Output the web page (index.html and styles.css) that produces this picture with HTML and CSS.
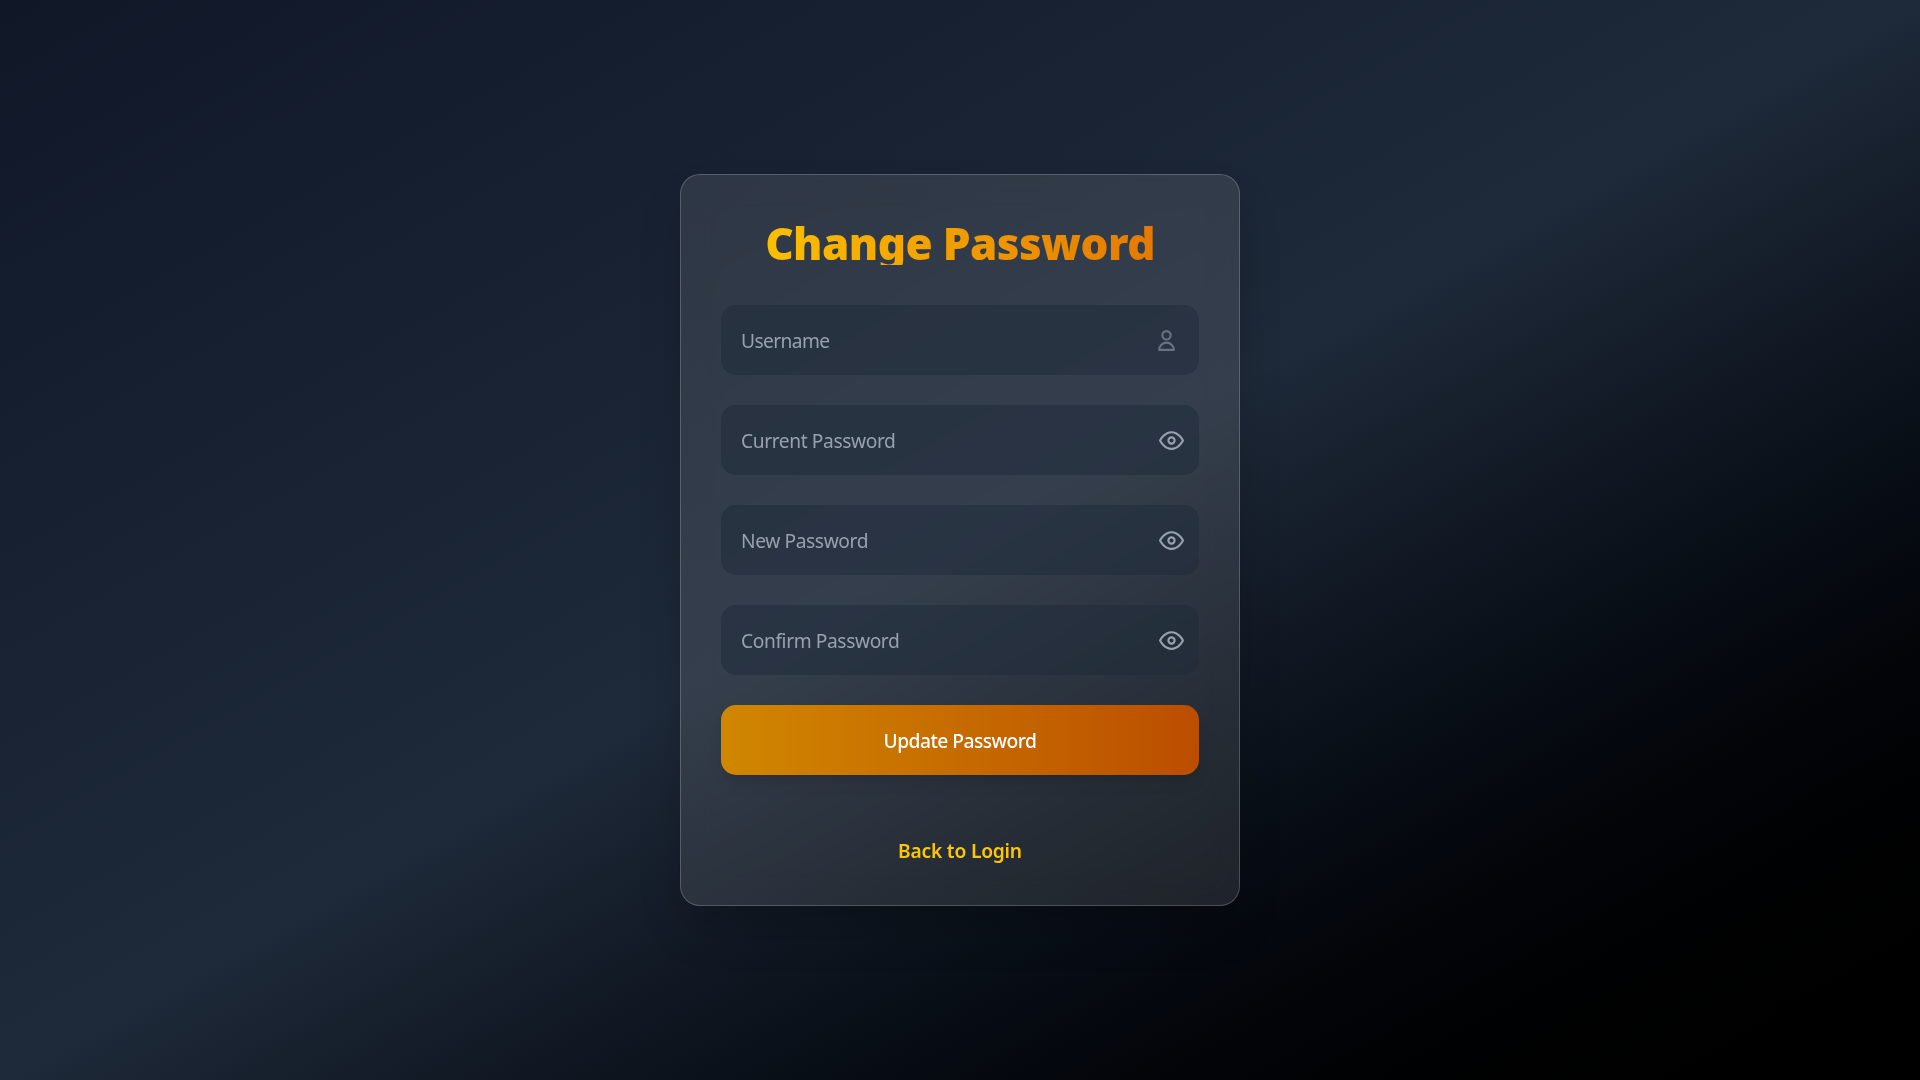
FILE: index.html
```html
<!DOCTYPE html>
<html lang="en">
<head>
<meta charset="utf-8">
<title>Change Password</title>
<link rel="stylesheet" href="styles.css">
</head>
<body>
<main class="page">
  <section class="card">
    <h1 class="title">Change Password</h1>
    <form class="form">
      <div class="field">
        <span class="placeholder username">Username</span>
        <svg class="icon icon-user" viewBox="0 0 24 24"><path d="M16 7a4 4 0 11-8 0 4 4 0 018 0zM12 14a7 7 0 00-7 7h14a7 7 0 00-7-7z"/></svg>
      </div>
      <div class="field">
        <span class="placeholder">Current Password</span>
        <svg class="icon" viewBox="0 0 24 24"><path d="M1 12s4-8 11-8 11 8 11 8-4 8-11 8-11-8-11-8z"/><circle cx="12" cy="12" r="3"/></svg>
      </div>
      <div class="field">
        <span class="placeholder">New Password</span>
        <svg class="icon" viewBox="0 0 24 24"><path d="M1 12s4-8 11-8 11 8 11 8-4 8-11 8-11-8-11-8z"/><circle cx="12" cy="12" r="3"/></svg>
      </div>
      <div class="field">
        <span class="placeholder">Confirm Password</span>
        <svg class="icon" viewBox="0 0 24 24"><path d="M1 12s4-8 11-8 11 8 11 8-4 8-11 8-11-8-11-8z"/><circle cx="12" cy="12" r="3"/></svg>
      </div>
      <button class="submit" type="button">Update Password</button>
    </form>
    <a class="back">Back to Login</a>
  </section>
</main>
</body>
</html>
```
FILE: styles.css
```css
* { box-sizing: border-box; margin: 0; }
html { font-size: 20px; }
body { font-family: "Noto Sans", "Open Sans", sans-serif; line-height: 1.5; }
.page {
  min-height: 100vh;
  display: flex;
  align-items: center;
  justify-content: center;
  background: linear-gradient(to bottom right in oklab, #101828 0%, #1e2939 50%, #000 100%);
}
.card {
  width: 28rem;
  padding: 2rem;
  display: flex;
  flex-direction: column;
  border: 1px solid rgba(255, 255, 255, .2);
  border-radius: 1rem;
  background: rgba(255, 255, 255, .1);
  backdrop-filter: blur(16px);
  box-shadow: 0 25px 50px -12px rgba(0, 0, 0, .25);
}
.title {
  height: 2.5rem;
  padding-top: 6px;
  margin-bottom: 2rem;
  font-size: 44px;
  font-weight: 900;
  line-height: 44px;
  letter-spacing: -.6px;
  text-align: center;
  white-space: nowrap;
  color: transparent;
  background: linear-gradient(to right in oklab, #fdc700, #e17100);
  -webkit-background-clip: text;
  background-clip: text;
}
.form { display: flex; flex-direction: column; gap: 1.5rem; }
.field {
  height: 3.5rem;
  padding: 0 .75rem 0 1rem;
  display: flex;
  align-items: center;
  justify-content: space-between;
  border-radius: .75rem;
  background: rgba(30, 41, 57, .5);
}
.placeholder { padding-top: 2px; font-size: 19.2px; color: #99a1af; letter-spacing: -.4px; }
.username { letter-spacing: -.6px; }
.icon {
  width: 1.25rem;
  height: 1.25rem;
  fill: none;
  stroke: #99a1af;
  stroke-width: 2;
  stroke-linecap: round;
  stroke-linejoin: round;
}
.icon-user { margin-right: .25rem; stroke: #6a7282; }
.submit {
  height: 3.5rem;
  padding: 1px 0 0;
  border: 0;
  border-radius: .75rem;
  background: linear-gradient(to right in oklab, #d08700, #bb4d00);
  box-shadow: 0 10px 15px -3px rgba(0, 0, 0, .1), 0 4px 6px -4px rgba(0, 0, 0, .1);
  color: #fff;
  font-family: inherit;
  font-size: 19.2px;
  font-weight: 500;
  letter-spacing: -.5px;
}
.back {
  height: 1.5rem;
  margin-top: 3rem;
  padding-top: 2px;
  text-align: center;
  font-size: 19.2px;
  font-weight: 600;
  color: #fdc700;
  letter-spacing: -.2px;
}
```
